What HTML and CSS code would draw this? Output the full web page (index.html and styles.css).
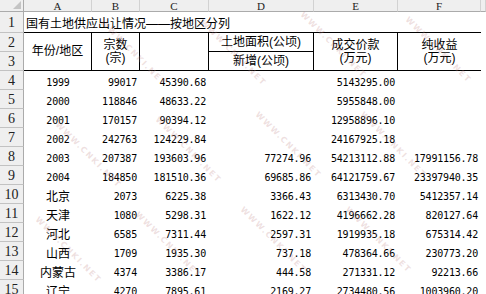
FILE: index.html
```html
<!DOCTYPE html>
<html lang="zh">
<head>
<meta charset="utf-8">
<title>国有土地供应出让情况</title>
<link rel="stylesheet" href="styles.css">
</head>
<body>
<div class="wrap">
<div class="sheet">
  <div class="corner"><span class="tri"></span></div>
  <div class="ch">A</div><div class="ch">B</div><div class="ch">C</div><div class="ch">D</div><div class="ch">E</div><div class="ch">F</div><div class="ch ch-last"></div>

  <div class="rh">1</div><div class="title">国有土地供应出让情况——按地区分列</div><div class="g"></div>

  <div class="rh">2</div>
  <div class="hd hd-tall">年份/地区</div>
  <div class="hd hd-tall two"><span>宗数</span><span>(宗)</span></div>
  <div class="hd hd-tall"></div>
  <div class="hd hd-top">土地面积(公顷)</div>
  <div class="hd hd-tall two"><span>成交价款</span><span>(万元)</span></div>
  <div class="hd hd-tall hd-end two"><span>纯收益</span><span>(万元)</span></div>
  <div class="g"></div>

  <div class="rh">3</div>
  <div class="hd hd-bot">新增(公顷)</div>
  <div class="g"></div>

  <div class="rh">4</div><div class="c ctr">1999</div><div class="c">99017</div><div class="c">45390.68</div><div class="c"></div><div class="c">5143295.00</div><div class="c"></div><div class="g"></div>
  <div class="rh">5</div><div class="c ctr">2000</div><div class="c">118846</div><div class="c">48633.22</div><div class="c"></div><div class="c">5955848.00</div><div class="c"></div><div class="g"></div>
  <div class="rh">6</div><div class="c ctr">2001</div><div class="c">170157</div><div class="c">90394.12</div><div class="c"></div><div class="c">12958896.10</div><div class="c"></div><div class="g"></div>
  <div class="rh">7</div><div class="c ctr">2002</div><div class="c">242763</div><div class="c">124229.84</div><div class="c"></div><div class="c">24167925.18</div><div class="c"></div><div class="g"></div>
  <div class="rh">8</div><div class="c ctr">2003</div><div class="c">207387</div><div class="c">193603.96</div><div class="c">77274.96</div><div class="c">54213112.88</div><div class="c">17991156.78</div><div class="g"></div>
  <div class="rh">9</div><div class="c ctr">2004</div><div class="c">184850</div><div class="c">181510.36</div><div class="c">69685.86</div><div class="c">64121759.67</div><div class="c">23397940.35</div><div class="g"></div>
  <div class="rh">10</div><div class="c ctr cjk">北京</div><div class="c">2073</div><div class="c">6225.38</div><div class="c">3366.43</div><div class="c">6313430.70</div><div class="c">5412357.14</div><div class="g"></div>
  <div class="rh">11</div><div class="c ctr cjk">天津</div><div class="c">1080</div><div class="c">5298.31</div><div class="c">1622.12</div><div class="c">4196662.28</div><div class="c">820127.64</div><div class="g"></div>
  <div class="rh">12</div><div class="c ctr cjk">河北</div><div class="c">6585</div><div class="c">7311.44</div><div class="c">2597.31</div><div class="c">1919935.18</div><div class="c">675314.42</div><div class="g"></div>
  <div class="rh">13</div><div class="c ctr cjk">山西</div><div class="c">1709</div><div class="c">1935.30</div><div class="c">737.18</div><div class="c">478364.66</div><div class="c">230773.20</div><div class="g"></div>
  <div class="rh">14</div><div class="c ctr cjk">内蒙古</div><div class="c">4374</div><div class="c">3386.17</div><div class="c">444.58</div><div class="c">271331.12</div><div class="c">92213.66</div><div class="g"></div>
  <div class="rh">15</div><div class="c ctr cjk">辽宁</div><div class="c">4270</div><div class="c">7895.61</div><div class="c">2169.27</div><div class="c">2734480.56</div><div class="c">1003960.20</div><div class="g"></div>
</div>
<div class="wm" aria-hidden="true">
  <span class="w w1">WWW.CNKI.NET</span>
  <span class="w w2">WWW.CNKI.NET</span>
  <span class="w w3">WWW.CNKI.NET</span>
  <span class="w w4">WWW.CNKI.NET</span>
  <span class="w w5">WWW.CNKI.NET</span>
  <span class="w w6">WWW.CNKI.NET</span>
  <span class="w w7">WWW.CNKI.NET</span>
  <span class="w w8">WWW.CNKI.NET</span>
  <span class="w w9">WWW.CNKI.NET</span>
  <span class="w w10">WWW.CNKI.NET</span>
  <span class="w w11">WWW.CNKI.NET</span>
  <span class="w w12">WWW.CNKI.NET</span>
</div>
</div>
</body>
</html>
```
FILE: styles.css
```css
html, body {
  margin: 0;
  padding: 0;
  background: #ffffff;
  overflow: hidden;
}
.wrap {
  position: relative;
  width: 486px;
  height: 294px;
  overflow: hidden;
}
.sheet {
  display: grid;
  grid-template-columns: 24px 68px 48px 69px 105px 84px 83px 5px;
  grid-template-rows: 12px 21px repeat(14, 19px);
  font-family: "DejaVu Sans Mono", monospace;
  color: #000;
}
.sheet > div {
  box-sizing: border-box;
  min-width: 0;
  overflow: hidden;
  white-space: nowrap;
}
.corner {
  position: relative;
  background: #efefef;
  border-right: 1px solid #ababab;
  border-bottom: 1px solid #ababab;
}
.tri {
  position: absolute;
  right: 2px;
  bottom: 2px;
  width: 0;
  height: 0;
  border-left: 8px solid transparent;
  border-bottom: 8px solid #c4c4c4;
}
.sheet > .ch {
  background: #efefef;
  border-right: 1px solid #d2d2d2;
  border-bottom: 1px solid #ababab;
  font-family: "Liberation Serif", serif;
  font-size: 11px;
  line-height: 12px;
  text-align: center;
  color: #222;
  overflow: visible;
}
.ch-last { border-right: none; }
.rh {
  grid-column: 1;
  background: #efefef;
  border-right: 1px solid #ababab;
  border-bottom: 1px solid #c2c2c2;
  font-family: "Liberation Serif", serif;
  font-size: 14px;
  display: flex;
  align-items: center;
  justify-content: center;
  padding-top: 1px;
  color: #222;
}
.title {
  grid-column: span 6;
  font-family: "Liberation Sans", "Noto Sans CJK SC", sans-serif;
  font-size: 12px;
  display: flex;
  align-items: center;
  padding-left: 2px;
  padding-top: 1px;
  border-bottom: 1px solid #000;
}
.hd {
  font-family: "Liberation Sans", "Noto Sans CJK SC", sans-serif;
  font-size: 12px;
  line-height: 13px;
  display: flex;
  flex-direction: column;
  align-items: center;
  justify-content: center;
  border-right: 1px solid #000;
  border-bottom: 1px solid #000;
}
.hd-tall { grid-row: span 2; }
.hd-end { border-right: none; }
.hd-top { padding-top: 1px; }
.c {
  display: flex;
  align-items: center;
  justify-content: flex-end;
  padding-right: 3px;
  padding-top: 3px;
  font-size: 10px;
  letter-spacing: -0.2px;
}
.ctr {
  justify-content: center;
  padding-right: 0;
}
.cjk {
  font-family: "Noto Sans CJK SC", sans-serif;
  font-size: 12px;
  letter-spacing: 0;
  padding-top: 1px;
}
.wm {
  position: absolute;
  inset: 0;
  pointer-events: none;
}
.w {
  position: absolute;
  font-family: "DejaVu Sans", sans-serif;
  font-size: 8px;
  font-weight: bold;
  letter-spacing: 1.5px;
  color: rgba(190, 130, 130, 0.25);
  transform: rotate(45deg);
  transform-origin: 0 0;
  white-space: nowrap;
}
.w1 { left: 105px; top: 18px; }
.w2 { left: 205px; top: 18px; }
.w3 { left: 305px; top: 10px; }
.w4 { left: 410px; top: 15px; }
.w5 { left: 60px; top: 120px; }
.w6 { left: 160px; top: 115px; }
.w7 { left: 260px; top: 110px; }
.w8 { left: 365px; top: 110px; }
.w9 { left: 40px; top: 215px; }
.w10 { left: 140px; top: 210px; }
.w11 { left: 245px; top: 205px; }
.w12 { left: 350px; top: 205px; }
```
